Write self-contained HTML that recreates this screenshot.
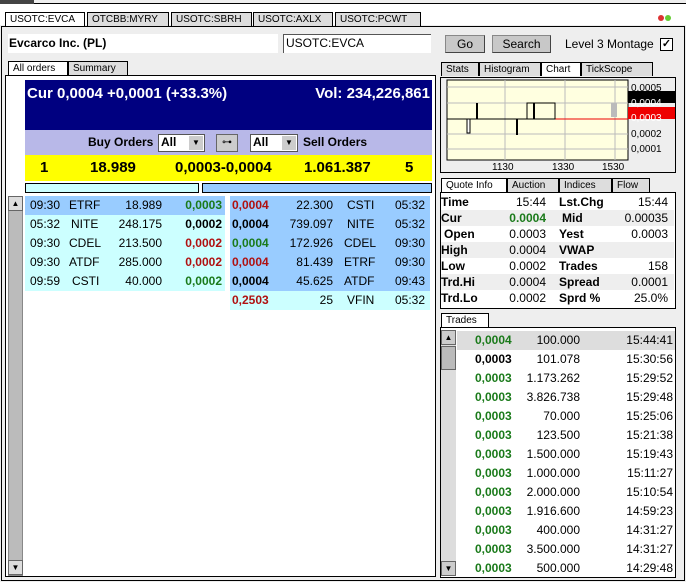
<!DOCTYPE html><html><head><style>
*{margin:0;padding:0;box-sizing:border-box}
body{width:686px;height:582px;background:#fff;font-family:"Liberation Sans",sans-serif;font-size:12px;position:relative;overflow:hidden}
.a{position:absolute}
.tab{position:absolute;height:14px;border:1px solid #000;border-bottom:none;background:#ddd;font-size:10px;line-height:13px;padding-left:4px;white-space:nowrap;overflow:hidden}
.tab.on{background:#fff}
.b{font-weight:bold}
.g{color:#1a7a1a}.r{color:#b01010}
.row{position:absolute;height:19px;line-height:19px;font-size:12px}
.row span{position:absolute;white-space:nowrap}
.q{position:absolute;left:441px;width:233px;height:16px;line-height:16px;font-size:12px}
.q span{position:absolute}
.btn{position:absolute;background:#c8c8c8;border:1px solid #888;border-right-color:#444;border-bottom-color:#444;text-align:center;font-size:12px;line-height:16px}
</style></head><body>
<div class="a" style="left:0;top:0;width:686px;height:4px;background:#eee;border-bottom:1px solid #000"></div>
<div class="a" style="left:0;top:0;width:34px;height:4px;background:#444"></div>
<div class="a" style="left:0;top:25px;width:686px;height:557px;background:#eee"></div>
<div class="tab on" style="left:5px;top:12px;width:80px">USOTC:EVCA</div>
<div class="tab" style="left:87px;top:12px;width:82px">OTCBB:MYRY</div>
<div class="tab" style="left:171px;top:12px;width:81px">USOTC:SBRH</div>
<div class="tab" style="left:253px;top:12px;width:80px">USOTC:AXLX</div>
<div class="tab" style="left:335px;top:12px;width:86px">USOTC:PCWT</div>
<div class="a" style="left:1px;top:26px;width:684px;height:555px;border:1px solid #000;background:#eee"></div>
<div class="a" style="left:658px;top:15px;width:6px;height:6px;border-radius:3px;background:#d33"></div>
<div class="a" style="left:665px;top:15px;width:6px;height:6px;border-radius:3px;background:#6c3"></div>
<div class="a" style="left:8px;top:34px;width:270px;height:19px;background:#fff"></div>
<div class="a b" style="left:9px;top:36px;font-size:12px">Evcarco Inc. (PL)</div>
<div class="a" style="left:283px;top:34px;width:148px;height:19px;background:#fff;border-top:1px solid #555;border-left:1px solid #555;font-size:12px;padding-left:2px;line-height:17px">USOTC:EVCA</div>
<div class="btn" style="left:445px;top:35px;width:40px;height:18px">Go</div>
<div class="btn" style="left:492px;top:35px;width:59px;height:18px">Search</div>
<div class="a" style="left:565px;top:37px;font-size:12px">Level 3 Montage</div>
<div class="a" style="left:660px;top:38px;width:13px;height:13px;border:1px solid #000;background:#fff;font-size:11px;line-height:11px;text-align:center;font-weight:bold">✓</div>
<div class="tab on" style="left:8px;top:61px;width:60px">All orders</div>
<div class="tab" style="left:68px;top:61px;width:60px">Summary</div>
<div class="a" style="left:5px;top:75px;width:431px;height:502px;border:1px solid #000;background:#fff"></div>
<div class="a b" style="left:25px;top:80px;width:407px;height:50px;background:#000080;color:#fff;font-size:15px">
<span class="a" style="left:2px;top:5px">Cur 0,0004 +0,0001 (+33.3%)</span><span class="a" style="right:2px;top:5px">Vol: 234,226,861</span></div>
<div class="a" style="left:25px;top:130px;width:407px;height:25px;background:#b8b8e8"></div>
<div class="a b" style="left:88px;top:135px;font-size:12px">Buy Orders</div>
<div class="a b" style="left:158px;top:134px;width:47px;height:18px;background:#fff;border:1px solid #555;font-size:12px;padding-left:2px">All</div>
<div class="a" style="left:189px;top:136px;width:14px;height:14px;background:#ccc;font-size:8px;text-align:center;line-height:14px">▼</div>
<div class="a" style="left:216px;top:134px;width:22px;height:18px;background:#ccc;border:1px solid #666;font-size:10px;text-align:center;line-height:16px">⊶</div>
<div class="a b" style="left:250px;top:134px;width:48px;height:18px;background:#fff;border:1px solid #555;font-size:12px;padding-left:2px">All</div>
<div class="a" style="left:282px;top:136px;width:14px;height:14px;background:#ccc;font-size:8px;text-align:center;line-height:14px">▼</div>
<div class="a b" style="left:303px;top:135px;font-size:12px">Sell Orders</div>
<div class="a b" style="left:25px;top:155px;width:407px;height:26px;background:#ffff00;font-size:15px;line-height:26px">
<span class="a" style="left:15px">1</span><span class="a" style="left:65px">18.989</span><span class="a" style="left:150px">0,0003-0,0004</span><span class="a" style="left:279px">1.061.387</span><span class="a" style="left:380px">5</span></div>
<div class="a" style="left:25px;top:183px;width:174px;height:10px;border:1px solid #000;background:#ccffff"></div>
<div class="a" style="left:202px;top:183px;width:230px;height:10px;border:1px solid #000;background:#99ccff"></div>
<div class="a" style="left:8px;top:196px;width:15px;height:380px;background:#bbb;border:1px solid #888"></div>
<div class="a" style="left:8px;top:196px;width:15px;height:15px;background:#ddd;border:1px solid #666;font-size:8px;text-align:center;line-height:13px">▲</div>
<div class="a" style="left:8px;top:560px;width:15px;height:15px;background:#ddd;border:1px solid #666;font-size:8px;text-align:center;line-height:13px">▼</div>
<div class="row" style="left:25px;top:196px;width:200px;background:#99ccff"><span style="left:5px">09:30</span><span style="left:44px">ETRF</span><span style="right:63px">18.989</span><span class="b g" style="right:3px">0,0003</span></div>
<div class="row" style="left:25px;top:215px;width:200px;background:#ccffff"><span style="left:5px">05:32</span><span style="left:46px">NITE</span><span style="right:63px">248.175</span><span class="b" style="right:3px">0,0002</span></div>
<div class="row" style="left:25px;top:234px;width:200px;background:#ccffff"><span style="left:5px">09:30</span><span style="left:44px">CDEL</span><span style="right:63px">213.500</span><span class="b r" style="right:3px">0,0002</span></div>
<div class="row" style="left:25px;top:253px;width:200px;background:#ccffff"><span style="left:5px">09:30</span><span style="left:44px">ATDF</span><span style="right:63px">285.000</span><span class="b r" style="right:3px">0,0002</span></div>
<div class="row" style="left:25px;top:272px;width:200px;background:#ccffff"><span style="left:5px">09:59</span><span style="left:47px">CSTI</span><span style="right:63px">40.000</span><span class="b g" style="right:3px">0,0002</span></div>
<div class="row" style="left:230px;top:196px;width:200px;background:#99ccff"><span class="b r" style="left:2px">0,0004</span><span style="right:97px">22.300</span><span style="left:117px">CSTI</span><span style="right:5px">05:32</span></div>
<div class="row" style="left:230px;top:215px;width:200px;background:#99ccff"><span class="b" style="left:2px">0,0004</span><span style="right:97px">739.097</span><span style="left:117px">NITE</span><span style="right:5px">05:32</span></div>
<div class="row" style="left:230px;top:234px;width:200px;background:#99ccff"><span class="b g" style="left:2px">0,0004</span><span style="right:97px">172.926</span><span style="left:114px">CDEL</span><span style="right:5px">09:30</span></div>
<div class="row" style="left:230px;top:253px;width:200px;background:#99ccff"><span class="b r" style="left:2px">0,0004</span><span style="right:97px">81.439</span><span style="left:114px">ETRF</span><span style="right:5px">09:30</span></div>
<div class="row" style="left:230px;top:272px;width:200px;background:#99ccff"><span class="b" style="left:2px">0,0004</span><span style="right:97px">45.625</span><span style="left:114px">ATDF</span><span style="right:5px">09:43</span></div>
<div class="row" style="left:230px;top:291px;width:200px;background:#ccffff"><span class="b r" style="left:2px">0,2503</span><span style="right:97px">25</span><span style="left:117px">VFIN</span><span style="right:5px">05:32</span></div>

<div class="tab" style="left:441px;top:62px;width:38px">Stats</div>
<div class="tab" style="left:479px;top:62px;width:62px">Histogram</div>
<div class="tab on" style="left:541px;top:62px;width:40px">Chart</div>
<div class="tab" style="left:581px;top:62px;width:72px">TickScope</div>
<div class="a" style="left:440px;top:77px;width:236px;height:96px;border:1px solid #000;background:#eee"></div>
<svg class="a" style="left:440px;top:77px" width="236" height="96">
<rect x="7" y="3" width="181" height="80" fill="#ffffe0" stroke="#000"/>
<g stroke="#bbb"><line x1="7" y1="10" x2="188" y2="10"/><line x1="7" y1="26" x2="188" y2="26"/><line x1="7" y1="42" x2="188" y2="42"/><line x1="7" y1="57" x2="188" y2="57"/><line x1="7" y1="72" x2="188" y2="72"/><line x1="65" y1="3" x2="65" y2="83"/><line x1="125" y1="3" x2="125" y2="83"/><line x1="175" y1="3" x2="175" y2="83"/></g>
<line x1="7" y1="42" x2="188" y2="42" stroke="#000"/><line x1="97" y1="42" x2="188" y2="42" stroke="#e00"/>
<rect x="36" y="26" width="2" height="16" fill="#000"/><rect x="76" y="42" width="2" height="16" fill="#000"/>
<rect x="27" y="42" width="3" height="14" fill="#fff" stroke="#000"/>
<rect x="87" y="26" width="28" height="16" fill="none" stroke="#000"/><rect x="93" y="26" width="2" height="16" fill="#000"/>
<rect x="171" y="26" width="6" height="14" fill="#bbb"/>
<rect x="188" y="14" width="47" height="12" fill="#000"/><rect x="188" y="30" width="47" height="12" fill="#e00"/>
<g font-size="10" font-family="Liberation Sans"><text x="191" y="14">0,0005</text><text x="191" y="29" fill="#fff">0,0004</text><text x="191" y="44" fill="#fff">0,0003</text><text x="191" y="60">0,0002</text><text x="191" y="75">0,0001</text>
<text x="52" y="93">1130</text><text x="112" y="93">1330</text><text x="162" y="93">1530</text></g></svg>
<div class="tab on" style="left:441px;top:178px;width:66px">Quote Info</div>
<div class="tab" style="left:507px;top:178px;width:52px">Auction</div>
<div class="tab" style="left:559px;top:178px;width:53px">Indices</div>
<div class="tab" style="left:612px;top:178px;width:38px">Flow</div>
<div class="a" style="left:440px;top:192px;width:236px;height:117px;border:1px solid #000;background:#fff"></div>
<div class="q" style="top:194px"><span class="b" style="left:0">Time</span><span style="right:128px">15:44</span><span class="b" style="left:118px">Lst.Chg</span><span style="right:6px">15:44</span></div>
<div class="q" style="top:210px;background:#eee"><span class="b" style="left:0">Cur</span><span class="b g" style="right:128px">0.0004</span><span class="b" style="left:121px">Mid</span><span style="right:6px">0.00035</span></div>
<div class="q" style="top:226px"><span class="b" style="left:3px">Open</span><span style="right:128px">0.0003</span><span class="b" style="left:118px">Yest</span><span style="right:6px">0.0003</span></div>
<div class="q" style="top:242px;background:#eee"><span class="b" style="left:0">High</span><span style="right:128px">0.0004</span><span class="b" style="left:118px">VWAP</span></div>
<div class="q" style="top:258px"><span class="b" style="left:0">Low</span><span style="right:128px">0.0002</span><span class="b" style="left:118px">Trades</span><span style="right:6px">158</span></div>
<div class="q" style="top:274px;background:#eee"><span class="b" style="left:0">Trd.Hi</span><span style="right:128px">0.0004</span><span class="b" style="left:118px">Spread</span><span style="right:6px">0.0001</span></div>
<div class="q" style="top:290px"><span class="b" style="left:0">Trd.Lo</span><span style="right:128px">0.0002</span><span class="b" style="left:118px">Sprd %</span><span style="right:6px">25.0%</span></div>
<div class="tab on" style="left:441px;top:313px;width:48px">Trades</div>
<div class="a" style="left:440px;top:327px;width:236px;height:251px;border:1px solid #000;background:#fff"></div>
<div class="a" style="left:441px;top:330px;width:15px;height:246px;background:#ddd"></div>
<div class="a" style="left:441px;top:330px;width:15px;height:15px;background:#ccc;border:1px solid #666;font-size:8px;text-align:center;line-height:13px">▲</div>
<div class="a" style="left:441px;top:346px;width:15px;height:24px;background:#bbb;border:1px solid #666"></div>
<div class="a" style="left:441px;top:561px;width:15px;height:15px;background:#ccc;border:1px solid #666;font-size:8px;text-align:center;line-height:13px">▼</div>
<div id="tr"></div>
<script>
var d=[["g","0,0004","100.000","15:44:41"],["","0,0003","101.078","15:30:56"],["g","0,0003","1.173.262","15:29:52"],["g","0,0003","3.826.738","15:29:48"],["g","0,0003","70.000","15:25:06"],["g","0,0003","123.500","15:21:38"],["g","0,0003","1.500.000","15:19:43"],["g","0,0003","1.000.000","15:11:27"],["g","0,0003","2.000.000","15:10:54"],["g","0,0003","1.916.600","14:59:23"],["g","0,0003","400.000","14:31:27"],["g","0,0003","3.500.000","14:31:27"],["g","0,0003","500.000","14:29:48"]];
var h="";d.forEach(function(r,i){h+='<div class="row" style="left:457px;top:'+(331+i*19)+'px;width:218px;'+(i==0?'background:#ddd':'')+'"><span class="b '+r[0]+'" style="left:18px">'+r[1]+'</span><span style="right:95px">'+r[2]+'</span><span style="right:2px">'+r[3]+'</span></div>'});
document.getElementById("tr").innerHTML=h;
</script>
</body></html>
